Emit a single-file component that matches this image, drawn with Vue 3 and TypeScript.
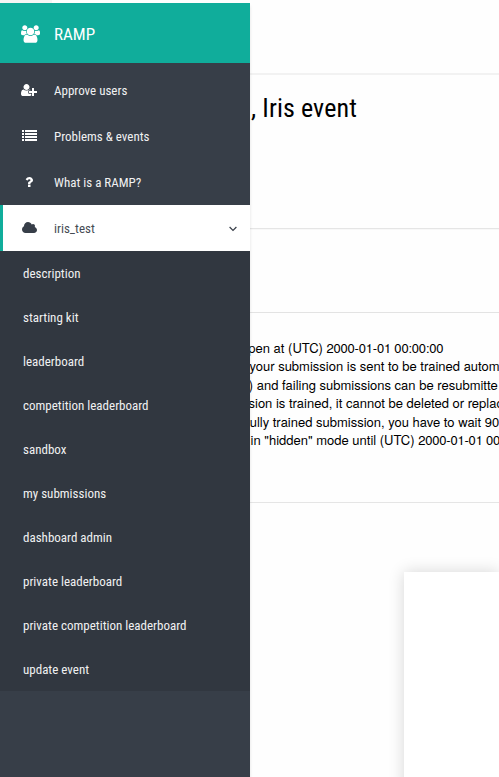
<script setup lang="ts">
interface NavItem {
  label: string
  icon: string
  box: string
  width: number
  active?: boolean
}

const groupIcon =
  'M593 896q-162 5-265 128h-134q-82 0-138-40.5t-56-118.5q0-353 124-353 6 0 43.5 21t97.5 42.5 119 21.5q67 0 133-23-5 37-5 66 0 159 90 256zm1071 637q0 120-73 189.5t-194 69.5h-874q-121 0-194-69.5t-73-189.5q0-53 3.5-103.5t14-109 26.5-108.5 43-97.5 62-81 85.5-53.5 111.5-20q10 0 43 21.5t73 48 107 48 135 21.5 135-21.5 107-48 73-48 43-21.5q61 0 111.5 20t85.5 53.5 62 81 43 97.5 26.5 108.5 14 109 3.5 103.5zm-1024-1277q0 106-75 181t-181 75-181-75-75-181 75-181 181-75 181 75 75 181zm704 384q0 159-112.5 271.5t-271.5 112.5-271.5-112.5-112.5-271.5 112.5-271.5 271.5-112.5 271.5 112.5 112.5 271.5zm576 225q0 78-56 118.5t-138 40.5h-134q-103-123-265-128 90-97 90-256 0-29-5-66 66 23 133 23 59 0 119-21.5t97.5-42.5 43.5-21q124 0 124 353zm-128-609q0 106-75 181t-181 75-181-75-75-181 75-181 181-75 181 75 75 181z'

const items: NavItem[] = [
  {
    label: 'Approve users',
    box: '0 0 2048 1792',
    width: 16,
    icon: 'M704 896q-159 0-271.5-112.5t-112.5-271.5 112.5-271.5 271.5-112.5 271.5 112.5 112.5 271.5-112.5 271.5-271.5 112.5zm960 128h352q13 0 22.5 9.5t9.5 22.5v192q0 13-9.5 22.5t-22.5 9.5h-352v352q0 13-9.5 22.5t-22.5 9.5h-192q-13 0-22.5-9.5t-9.5-22.5v-352h-352q-13 0-22.5-9.5t-9.5-22.5v-192q0-13 9.5-22.5t22.5-9.5h352v-352q0-13 9.5-22.5t22.5-9.5h192q13 0 22.5 9.5t9.5 22.5v352zm-736 224q0 52 38 90t90 38h256v238q-68 50-171 50h-874q-121 0-194-69t-73-190q0-53 3.5-103.5t14-109 26.5-108.5 43-97.5 62-81 85.5-53.5 111.5-20q19 0 39 17 79 61 154.5 91.5t164.5 30.5 164.5-30.5 154.5-91.5q20-17 39-17 132 0 217 96h-223q-52 0-90 38t-38 90v192z',
  },
  {
    label: 'Problems & events',
    box: '0 0 15 14',
    width: 15,
    icon: 'M0 1h2v2H0zM3 1h12v2H3zM0 4h2v2H0zM3 4h12v2H3zM0 7h2v2H0zM3 7h12v2H3zM0 10h2v2H0zM3 10h12v2H3z',
  },
  {
    label: 'What is a RAMP?',
    box: '0 0 1792 1792',
    width: 14,
    icon: 'M1088 1256v240q0 16-12 28t-28 12h-240q-16 0-28-12t-12-28v-240q0-16 12-28t28-12h240q16 0 28 12t12 28zm316-600q0 54-15.5 101t-35 76.5-55 59.5-57.5 43.5-61 35.5q-41 23-68.5 65t-27.5 67q0 17-12 32.5t-28 15.5h-240q-15 0-25.5-18.5t-10.5-37.5v-45q0-83 65-156.5t143-108.5q59-27 84-56t25-76q0-42-46.5-74t-107.5-32q-65 0-108 29-35 25-107 115-13 16-31 16-12 0-25-8l-164-125q-13-10-15.5-25t5.5-28q160-266 464-266 80 0 161 31t146 83 106 127.5 41 158.5z',
  },
  {
    label: 'iris_test',
    box: '0 0 1920 1792',
    width: 15,
    active: true,
    icon: 'M1920 1152q0 159-112.5 271.5t-271.5 112.5h-1088q-185 0-316.5-131.5t-131.5-316.5q0-132 71-241.5t187-163.5q-2-28-2-43 0-212 150-362t362-150q158 0 286.5 88t187.5 230q70-62 166-62 106 0 181 75t75 181q0 75-41 138 129 30 213 134.5t84 239.5z',
  },
]

const subItems: string[] = [
  'description',
  'starting kit',
  'leaderboard',
  'competition leaderboard',
  'sandbox',
  'my submissions',
  'dashboard admin',
  'private leaderboard',
  'private competition leaderboard',
  'update event',
]

interface Rule {
  text: string
  stamp?: string
  offset: number
}

const rules: Rule[] = [
  { text: 'pen at (UTC) ', stamp: '2000-01-01 00:00:00', offset: -1.7 },
  { text: 'your submission is sent to be trained autom', offset: -0.5 },
  { text: ') and failing submissions can be resubmitte', offset: -1.2 },
  { text: 'sion is trained, it cannot be deleted or replac', offset: -1.5 },
  { text: 'ully trained submission, you have to wait 90', offset: -0.3 },
  { text: 'in "hidden" mode until (UTC) ', stamp: '2000-01-01 00', offset: 0.6 },
]
</script>

<template>
  <div class="page">
    <nav class="sidebar">
      <div class="brand">
        <span class="slot"><svg width="19" height="18" viewBox="0 0 1920 1792"><path :d="groupIcon" /></svg></span>
        <span class="brand-name">RAMP</span>
      </div>
      <ul class="menu">
        <li v-for="item in items" :key="item.label" class="item" :class="{ active: item.active }">
          <span class="slot"><svg :width="item.width" height="14" :viewBox="item.box"><path :d="item.icon" /></svg></span>
          <span class="label">{{ item.label }}</span>
          <svg v-if="item.active" class="chevron" width="8" height="6" viewBox="0 0 8 6"><path d="M.6 1 4 4.4 7.4 1" /></svg>
        </li>
      </ul>
      <ul class="submenu">
        <li v-for="s in subItems" :key="s"><span class="label">{{ s }}</span></li>
      </ul>
    </nav>
    <main class="content">
      <header class="topbar"></header>
      <section class="heading"><h1>, Iris event</h1></section>
      <section class="tools"></section>
      <section class="rules">
        <p v-for="(r, i) in rules" :key="i" :style="{ marginLeft: r.offset + 'px' }">{{ r.text }}<span v-if="r.stamp" class="stamp">{{ r.stamp }}</span></p>
      </section>
      <section class="panel-row"><div class="panel"></div></section>
    </main>
  </div>
</template>

<style>
body {
  margin: 0;
  overflow: hidden;
}
</style>

<style scoped>
.page {
  display: flex;
  box-sizing: border-box;
  width: 499px;
  height: 777px;
  padding-top: 3px;
  overflow: hidden;
  background: linear-gradient(#f5f5f5, #f5f5f5) 0 0 / 52px 3px no-repeat #fefefe;
  font-family: 'Roboto Condensed', Roboto, sans-serif;
  font-stretch: 75%;
}
.sidebar {
  position: relative;
  z-index: 1;
  flex: 0 0 250px;
  background: #373e48;
  color: #fff;
  box-shadow: 0 3px 3px rgba(0, 0, 0, 0.12);
}
ul {
  margin: 0;
  padding: 0;
  list-style: none;
}
svg {
  display: block;
  fill: currentColor;
}
.slot {
  display: flex;
  justify-content: center;
  width: 20px;
  margin-right: 15px;
}
.brand {
  display: flex;
  align-items: center;
  box-sizing: border-box;
  height: 60px;
  padding: 2px 0 0 20px;
  background: #10ad9b;
}
.brand .slot {
  margin-right: 14px;
}
.brand-name {
  font-size: 17px;
}
.menu {
  padding-top: 4px;
}
.item {
  display: flex;
  align-items: center;
  box-sizing: border-box;
  height: 46px;
  padding-left: 19px;
}
.label {
  padding-top: 2px;
  font-size: 13px;
  line-height: 18px;
  opacity: 0.93;
  white-space: nowrap;
}
.active {
  padding-left: 16px;
  border-left: 3px solid #10ad9b;
  background: #fff;
  color: #373e48;
}
.chevron {
  margin: 2px 13px 0 auto;
  fill: none;
  stroke: currentColor;
  stroke-width: 1.2;
}
.submenu {
  background: #313740;
}
.submenu li {
  display: flex;
  align-items: center;
  height: 44px;
  padding-left: 23px;
}
.content {
  flex: 1;
  min-width: 0;
}
.content section,
.topbar {
  box-sizing: border-box;
}
.topbar {
  height: 72px;
  border-bottom: 2px solid #f2f2f2;
}
.heading {
  height: 154px;
  padding: 15px 0 0 1px;
  border-bottom: 1px solid #e5e5e5;
}
.heading + .tools {
  box-shadow: inset 0 1px #f8f8f8;
}
h1 {
  margin: 0;
  color: #000;
  font-size: 26px;
  font-weight: 400;
  letter-spacing: 0.1px;
  line-height: 36px;
}
.tools {
  height: 84px;
  border-bottom: 1px solid #e3e3e3;
}
.rules {
  height: 190px;
  padding-top: 26px;
  border-bottom: 1px solid #e5e5e5;
  color: #000;
  font-family: 'TeX Gyre Heros', 'Liberation Sans', Arial, sans-serif;
  font-size: 13px;
  font-stretch: normal;
  line-height: 18.4px;
}
.rules p {
  margin: 0;
  height: 18.4px;
  white-space: nowrap;
}
.stamp {
  letter-spacing: -0.2px;
}
.panel-row {
  padding: 69px 0 0 154px;
}
.panel {
  height: 220px;
  background: #fff;
  box-shadow: 0 0 15px rgba(0, 0, 0, 0.16);
}
</style>
